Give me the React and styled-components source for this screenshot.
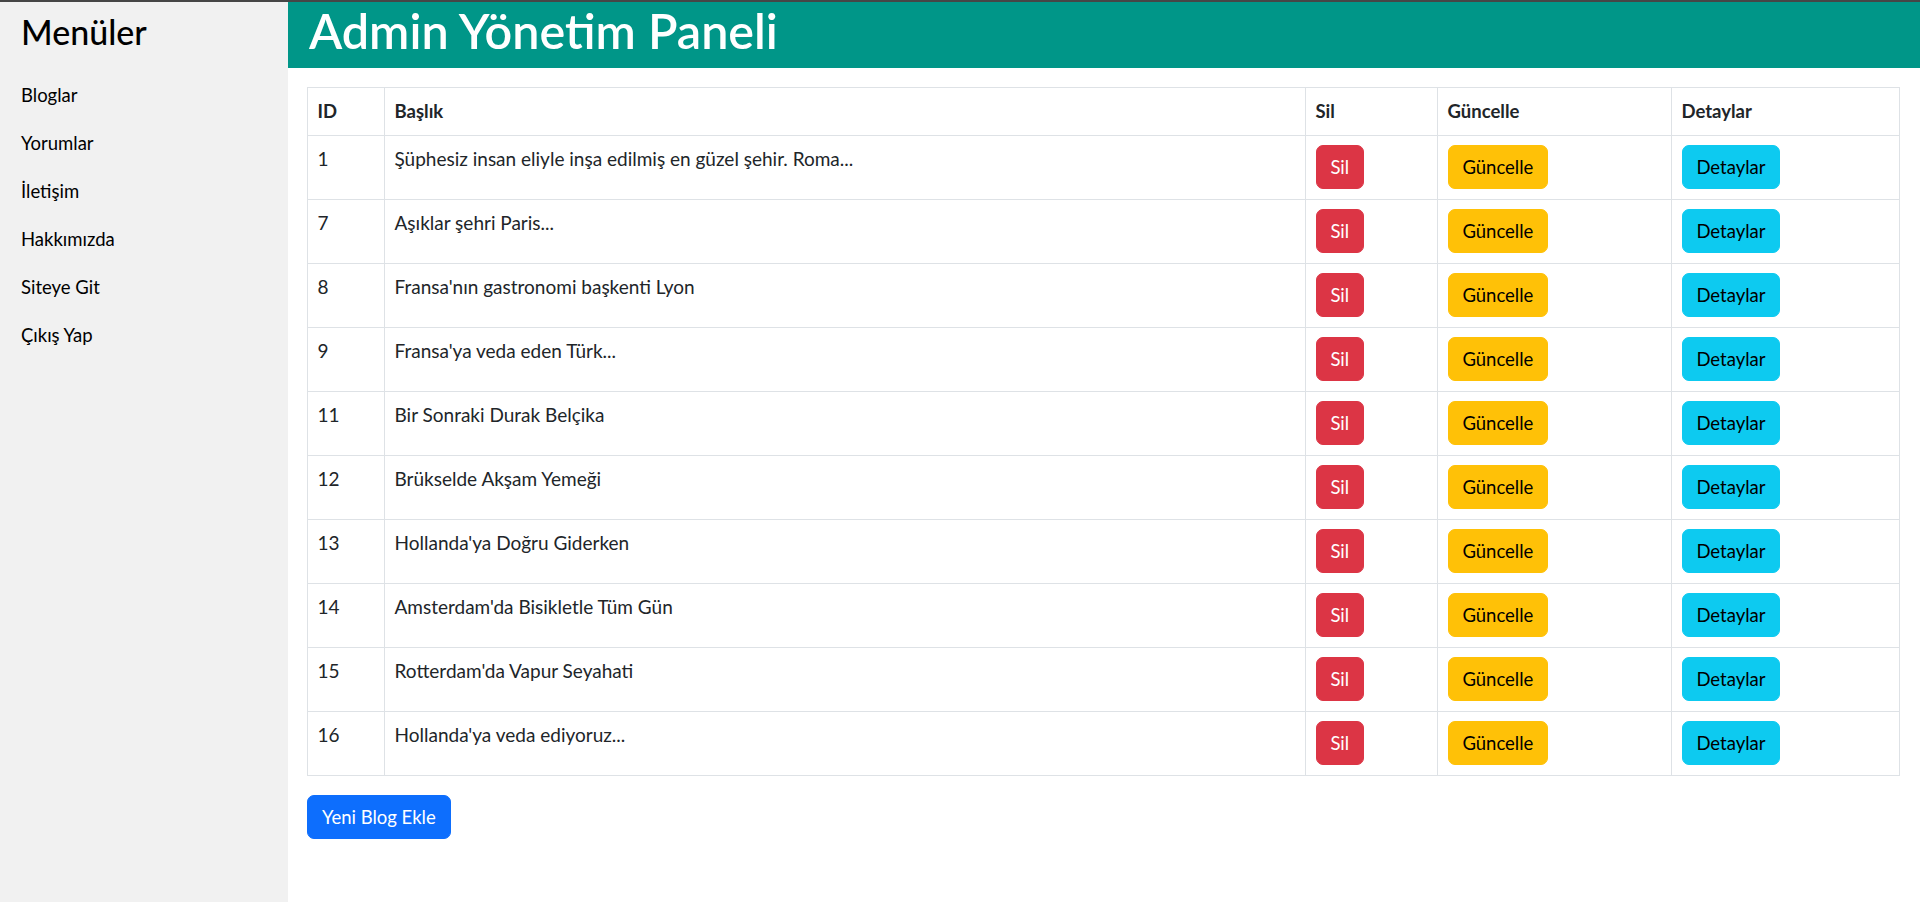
import styled, { createGlobalStyle } from 'styled-components'

const GlobalStyle = createGlobalStyle`
  html, body {
    margin: 0;
    padding: 0;
    background: #fff;
  }
  body {
    font-family: "Segoe UI", Lato, "Open Sans", sans-serif;
    font-size: 18.5px;
    color: #212529;
    border-top: 2px solid #464646;
  }
  * {
    box-sizing: border-box;
  }
`

const Layout = styled.div`
  display: flex;
  min-height: 900px;
`
const Sidebar = styled.aside`
  flex: 0 0 288px;
  background: #f1f1f1;
  padding: 8px 20px 0 21px;
`
const SideTitle = styled.h2`
  margin: 0 0 18px;
  font-size: 34px;
  font-weight: 500;
  line-height: 43px;
  color: #000;
`
const MenuList = styled.ul`
  list-style: none;
  margin: 0;
  padding: 0;
`
const MenuLink = styled.a`
  display: block;
  line-height: 48px;
  color: #000;
  text-decoration: none;
`
const Main = styled.main`
  flex: 1;
  min-width: 0;
`
const Header = styled.header`
  height: 66px;
  background: #009688;
  padding: 0 0 10px 21px;
`
const Title = styled.h1`
  margin: 0;
  font-size: 48.5px;
  font-weight: 600;
  line-height: 56px;
  color: #fff;
`
const Content = styled.div`
  padding: 19px 21px 0 19px;
`
const Table = styled.table`
  width: 100%;
  table-layout: fixed;
  border-collapse: collapse;
  border: 1px solid #dee2e6;
`
const Th = styled.th`
  width: ${(p) => p.$w}px;
  padding: 9.5px;
  text-align: left;
  vertical-align: top;
  font-weight: 700;
  line-height: 27.75px;
  border: 1px solid #dee2e6;
`
const Td = styled.td`
  padding: 9.5px;
  vertical-align: top;
  font-size: 19px;
  line-height: 27.75px;
  border: 1px solid #dee2e6;
  white-space: nowrap;
`
const colors = {
  danger: { bg: '#dc3545', fg: '#fff' },
  warning: { bg: '#ffc107', fg: '#000' },
  info: { bg: '#0dcaf0', fg: '#000' },
  primary: { bg: '#0d6efd', fg: '#fff' },
}
const Button = styled.button`
  display: inline-block;
  height: 44px;
  padding: 0 13.9px;
  font-family: inherit;
  font-size: 18.5px;
  line-height: 42px;
  border-radius: 7px;
  border: 1px solid ${(p) => colors[p.$variant].bg};
  background: ${(p) => colors[p.$variant].bg};
  color: ${(p) => colors[p.$variant].fg};
  cursor: pointer;
`
const AddButton = styled(Button)`
  margin-top: 19px;
`

const menu = ['Bloglar', 'Yorumlar', 'İletişim', 'Hakkımızda', 'Siteye Git', 'Çıkış Yap']

const blogs = [
  { id: 1, title: 'Şüphesiz insan eliyle inşa edilmiş en güzel şehir. Roma...' },
  { id: 7, title: 'Aşıklar şehri Paris...' },
  { id: 8, title: "Fransa'nın gastronomi başkenti Lyon" },
  { id: 9, title: "Fransa'ya veda eden Türk..." },
  { id: 11, title: 'Bir Sonraki Durak Belçika' },
  { id: 12, title: 'Brükselde Akşam Yemeği' },
  { id: 13, title: "Hollanda'ya Doğru Giderken" },
  { id: 14, title: "Amsterdam'da Bisikletle Tüm Gün" },
  { id: 15, title: "Rotterdam'da Vapur Seyahati" },
  { id: 16, title: "Hollanda'ya veda ediyoruz..." },
]

function App() {
  return (
    <>
      <GlobalStyle />
      <Layout>
        <Sidebar>
          <SideTitle>Menüler</SideTitle>
          <MenuList>
            {menu.map((item) => (
              <li key={item}>
                <MenuLink href="#">{item}</MenuLink>
              </li>
            ))}
          </MenuList>
        </Sidebar>

        <Main>
          <Header>
            <Title>Admin Yönetim Paneli</Title>
          </Header>
          <Content>
            <Table>
              <thead>
                <tr>
                  <Th $w={77}>ID</Th>
                  <Th $w={921}>Başlık</Th>
                  <Th $w={132}>Sil</Th>
                  <Th $w={234}>Güncelle</Th>
                  <Th $w={228}>Detaylar</Th>
                </tr>
              </thead>
              <tbody>
                {blogs.map((blog) => (
                  <tr key={blog.id}>
                    <Td>{blog.id}</Td>
                    <Td>{blog.title}</Td>
                    <Td>
                      <Button $variant="danger">Sil</Button>
                    </Td>
                    <Td>
                      <Button $variant="warning">Güncelle</Button>
                    </Td>
                    <Td>
                      <Button $variant="info">Detaylar</Button>
                    </Td>
                  </tr>
                ))}
              </tbody>
            </Table>
            <AddButton $variant="primary">Yeni Blog Ekle</AddButton>
          </Content>
        </Main>
      </Layout>
    </>
  )
}

export default App
